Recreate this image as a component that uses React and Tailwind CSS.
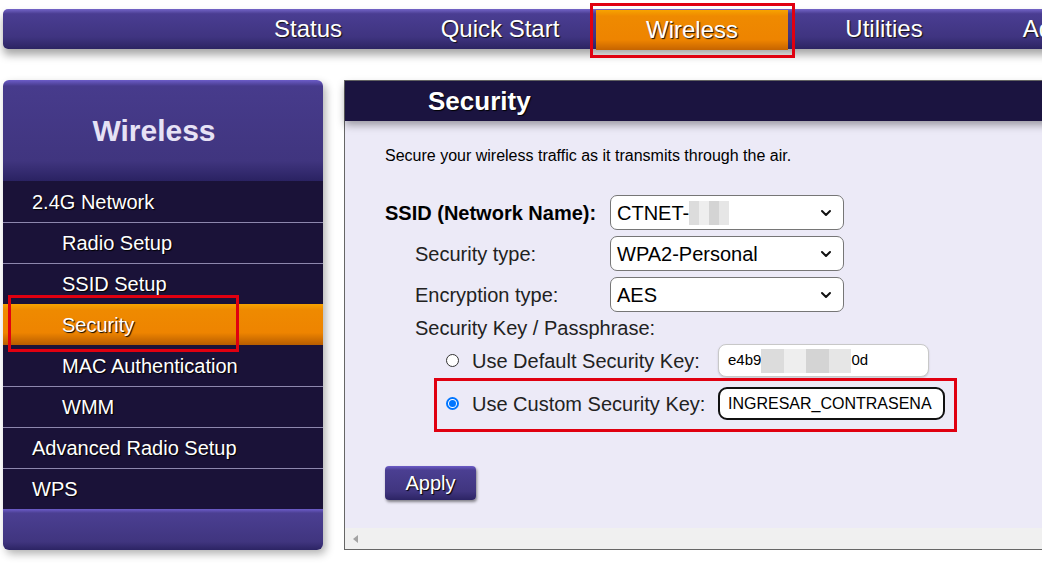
import React from 'react';

const NAV = ['Status', 'Quick Start', 'Wireless', 'Utilities', 'Advanced'];

const MENU = [
  { label: '2.4G Network', sub: false },
  { label: 'Radio Setup', sub: true },
  { label: 'SSID Setup', sub: true },
  { label: 'Security', sub: true, active: true },
  { label: 'MAC Authentication', sub: true },
  { label: 'WMM', sub: true },
  { label: 'Advanced Radio Setup', sub: false },
  { label: 'WPS', sub: false },
];

function Chevron() {
  return (
    <svg width="12" height="8" viewBox="0 0 12 8" className="shrink-0">
      <path d="M2 2l4 4 4-4" fill="none" stroke="#111" strokeWidth="2" strokeLinecap="round" strokeLinejoin="round" />
    </svg>
  );
}

function Select({ children }) {
  return (
    <div className="flex h-[35px] w-[234px] items-center justify-between rounded-[7px] border border-[#767676] bg-white pl-[6px] pr-[11px] text-[20px] text-black">
      <div className="flex items-center">{children}</div>
      <Chevron />
    </div>
  );
}

function Blur({ w }) {
  return (
    <span className="inline-flex h-[24px]" style={{ width: w }}>
      <span className="h-full flex-1 bg-[#dcdcdc]" />
      <span className="h-full flex-1 bg-[#eeeeee]" />
      <span className="h-full flex-1 bg-[#d4d4d4]" />
      <span className="h-full flex-1 bg-[#e6e6e6]" />
    </span>
  );
}

function Radio({ checked }) {
  return checked ? (
    <span className="flex h-[13px] w-[13px] items-center justify-center rounded-full border-2 border-[#0075ff] bg-white">
      <span className="h-[7px] w-[7px] rounded-full bg-[#0075ff]" />
    </span>
  ) : (
    <span className="h-[13px] w-[13px] rounded-full border border-[#333] bg-white" />
  );
}

export default function App() {
  return (
    <div className="relative h-[564px] w-[1042px] overflow-hidden bg-white font-['Liberation_Sans',Arial,sans-serif]">
      {/* top navigation */}
      <div className="ml-[3px] mt-[9px] flex h-[40px] w-[1100px] rounded-l-[5px] bg-[linear-gradient(to_bottom,#7465c8_0%,#4a3d92_12%,#3f3480_70%,#2c2462_100%)] pl-[209px] shadow-[0_6px_8px_rgba(0,0,0,0.35)]">
        {NAV.map((item) => (
          <div
            key={item}
            className={`flex h-full w-[192px] shrink-0 items-center justify-center whitespace-nowrap text-[24px] text-white [text-shadow:1px_1px_1px_#111] ${
              item === 'Wireless'
                ? 'mt-[1px] h-[38px] bg-[linear-gradient(to_bottom,#f7a300_0%,#ef8a00_15%,#ee8400_75%,#c66400_100%)]'
                : ''
            }`}
          >
            {item}
          </div>
        ))}
      </div>

      <div className="mt-[31px] flex">
        {/* sidebar */}
        <div className="ml-[3px] w-[320px] shrink-0 overflow-hidden rounded-[6px] shadow-[3px_4px_8px_rgba(0,0,0,0.3)]">
          <div className="flex h-[101px] items-center justify-center bg-[linear-gradient(to_bottom,#6c5cc8_0%,#473b8c_6%,#40357f_80%,#2a2262_100%)] pr-[18px] text-[30px] font-bold text-[#e6e2f5]">
            Wireless
          </div>
          {MENU.map((m, i) => (
            <div
              key={m.label}
              className={`flex h-[41px] items-center text-[20px] text-white [text-shadow:1px_1px_1px_#000] ${
                m.sub ? 'pl-[59px]' : 'pl-[29px]'
              } ${
                m.active
                  ? 'bg-[linear-gradient(to_bottom,#f7a300_0%,#ef8a00_15%,#ee8400_70%,#b75d00_100%)]'
                  : `bg-[#1a1238] ${i > 0 && !MENU[i - 1].active ? 'border-t border-[#8d87ad]' : ''}`
              }`}
            >
              {m.label}
            </div>
          ))}
          <div className="h-[41px] bg-[linear-gradient(to_bottom,#6c5cc8_0%,#4b3f92_10%,#40357f_80%,#2c2464_100%)]" />
        </div>

        {/* main panel */}
        <div className="ml-[21px] flex h-[470px] w-[720px] shrink-0 flex-col border border-[#666] bg-[#eceaf7]">
          <div className="flex h-[40px] shrink-0 items-center bg-[#1b1440] pl-[83px] text-[26px] font-bold text-white shadow-[0_4px_8px_rgba(0,0,0,0.35)] [text-shadow:1px_1px_1px_#000]">
            Security
          </div>
          <div className="flex-1 pl-[40px] pt-[23px] text-[#222]">
            <div className="text-[16px] text-black">Secure your wireless traffic as it transmits through the air.</div>

            <div className="mt-[27px] flex flex-col gap-[6px]">
              <div className="flex items-center">
                <div className="w-[225px] text-[20px] font-bold text-black">SSID (Network Name):</div>
                <Select>
                  CTNET-
                  <Blur w={40} />
                </Select>
              </div>
              <div className="flex items-center">
                <div className="w-[225px] pl-[30px] text-[20px]">Security type:</div>
                <Select>WPA2-Personal</Select>
              </div>
              <div className="flex items-center">
                <div className="w-[225px] pl-[30px] text-[20px]">Encryption type:</div>
                <Select>AES</Select>
              </div>
            </div>

            <div className="mt-[2px] pl-[30px] text-[20px] leading-[28px]">Security Key / Passphrase:</div>

            <div className="mt-[2px] flex h-[33px] items-center pl-[61px]">
              <Radio />
              <span className="ml-[13px] w-[246px] text-[20px]">Use Default Security Key:</span>
              <div className="flex h-[33px] w-[211px] items-center rounded-[8px] border border-[#c8c8c8] bg-white pl-[9px] text-[15px] text-black shadow-[0_1px_2px_rgba(0,0,0,0.15)]">
                e4b9
                <Blur w={90} />
                0d
              </div>
            </div>

            <div className="mt-[10px] flex h-[33px] items-center pl-[61px]">
              <Radio checked />
              <span className="ml-[13px] w-[246px] text-[20px]">Use Custom Security Key:</span>
              <div className="flex h-[33px] w-[227px] items-center rounded-[9px] border-2 border-[#111] bg-white pl-[8px] text-[16px] text-black">
                INGRESAR_CONTRASENA
              </div>
            </div>

            <button className="mt-[46px] h-[34px] w-[91px] rounded-[4px] bg-[linear-gradient(to_bottom,#6c5cc8_0%,#4b3f92_12%,#40357f_75%,#2c2464_100%)] text-[20px] text-white shadow-[1px_2px_3px_rgba(0,0,0,0.45)] [text-shadow:1px_1px_1px_#000]">
              Apply
            </button>
          </div>
          <div className="flex h-[21px] shrink-0 items-center bg-[#f0f0f0] pl-[8px]">
            <svg width="6" height="8" viewBox="0 0 6 8">
              <path d="M5 0L0 4l5 4z" fill="#a3a3a3" />
            </svg>
          </div>
        </div>
      </div>

      {/* red annotation boxes */}
      <div className="absolute left-[590px] top-[3px] h-[55px] w-[205px] border-[3px] border-[#e00010]" />
      <div className="absolute left-[8px] top-[295px] h-[57px] w-[231px] border-[3px] border-[#e00010]" />
      <div className="absolute left-[434px] top-[378px] h-[54px] w-[523px] border-[3px] border-[#e00010]" />
    </div>
  );
}
